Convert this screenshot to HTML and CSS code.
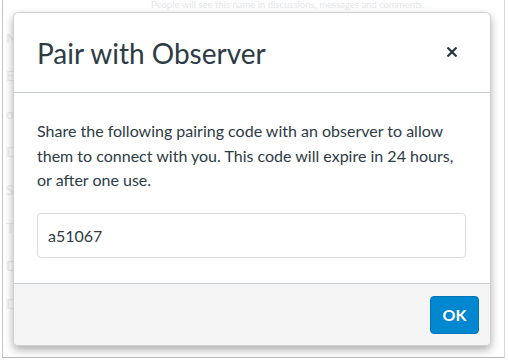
FILE: index.html
```html
<!DOCTYPE html>
<html>
<head>
<meta charset="utf-8">
<link rel="stylesheet" href="styles.css">
</head>
<body>
<div class="frame">
  <div class="page">
    <p class="page-hint">People will see this name in discussions, messages and comments.</p>
    <div class="page-side">
      <span>N</span><span>E</span><span>o</span><span>D</span><span>S</span><span>Ti</span><span>D</span><span>D</span>
    </div>
  </div>
  <div class="dialog" role="dialog">
    <div class="dialog-header">
      <h1 class="dialog-title">Pair with Observer</h1>
      <button class="close" aria-label="Close">
        <svg width="10" height="10" viewBox="0 0 10 10"><path d="M1.2 1.2 L8.8 8.8 M8.8 1.2 L1.2 8.8" stroke="#2d3b45" stroke-width="2.3" stroke-linecap="round"/></svg>
      </button>
    </div>
    <div class="dialog-body">
      <p class="dialog-text">Share the following pairing code with an observer to allow them to connect with you. This code will expire in 24 hours, or after one use.</p>
      <div class="code-field">a51067</div>
    </div>
    <div class="dialog-footer">
      <button class="ok">OK</button>
    </div>
  </div>
</div>
</body>
</html>
```
FILE: styles.css
```css
html, body {
  margin: 0;
  padding: 0;
  background: #ffffff;
}
body {
  font-family: Lato, "Noto Sans", sans-serif;
  color: #2d3b45;
  width: 508px;
  height: 361px;
  overflow: hidden;
}
.frame {
  position: relative;
  margin-left: 2px;
  width: 501px;
  height: 357px;
  border-left: 1px solid #c4c4c4;
  border-right: 1px solid #d6d6d6;
  border-bottom: 1px solid #b8b8b8;
  background: #ffffff;
  overflow: hidden;
}
.page {
  height: 100%;
}
.page-hint {
  margin: 0 0 0 148px;
  font-size: 9.5px;
  line-height: 10px;
  white-space: nowrap;
  color: #e4e6e8;
}
.page-side {
  display: flex;
  flex-direction: column;
  gap: 22px;
  margin: 20px 0 0 3px;
  font-size: 14px;
  line-height: 16px;
  color: #ebedee;
}
.dialog {
  position: absolute;
  left: 10px;
  top: 12px;
  width: 476px;
  height: 332px;
  background: #ffffff;
  border: 1px solid #cfd2d5;
  border-radius: 5px;
  box-shadow: 0 4px 9px rgba(0, 0, 0, 0.32);
  display: flex;
  flex-direction: column;
  overflow: hidden;
}
.dialog-header {
  height: 79px;
  border-bottom: 1px solid #c7cdd1;
  display: flex;
  align-items: center;
  justify-content: space-between;
  padding: 0 33px 0 23px;
}
.dialog-title {
  margin: 0;
  font-weight: 400;
  font-size: 28px;
  line-height: 34px;
  color: #2d3b45;
}
.close {
  border: 0;
  background: none;
  padding: 0;
  width: 10px;
  height: 10px;
  display: flex;
  margin-bottom: 2px;
}
.dialog-body {
  flex: 1;
  padding: 26px 23px 0 23px;
}
.dialog-text {
  margin: 0;
  font-size: 16px;
  line-height: 24.5px;
  color: #2d3b45;
}
.code-field {
  margin-top: 20px;
  width: 429px;
  height: 45px;
  box-sizing: border-box;
  border: 1px solid #d9dcde;
  border-radius: 4px;
  padding: 0 10px;
  display: flex;
  align-items: center;
  font-size: 16px;
  color: #2d3b45;
}
.dialog-footer {
  height: 61px;
  border-top: 1px solid #c7cdd1;
  background: #f5f5f5;
  display: flex;
  align-items: center;
  justify-content: flex-end;
  padding-right: 11px;
}
.ok {
  width: 49px;
  height: 38px;
  box-sizing: border-box;
  background: #0087d0;
  border: 1px solid #0077b9;
  border-radius: 4px;
  color: #ffffff;
  font-family: Lato, "Noto Sans", sans-serif;
  font-weight: 700;
  font-size: 16px;
  padding: 0;
}
```
